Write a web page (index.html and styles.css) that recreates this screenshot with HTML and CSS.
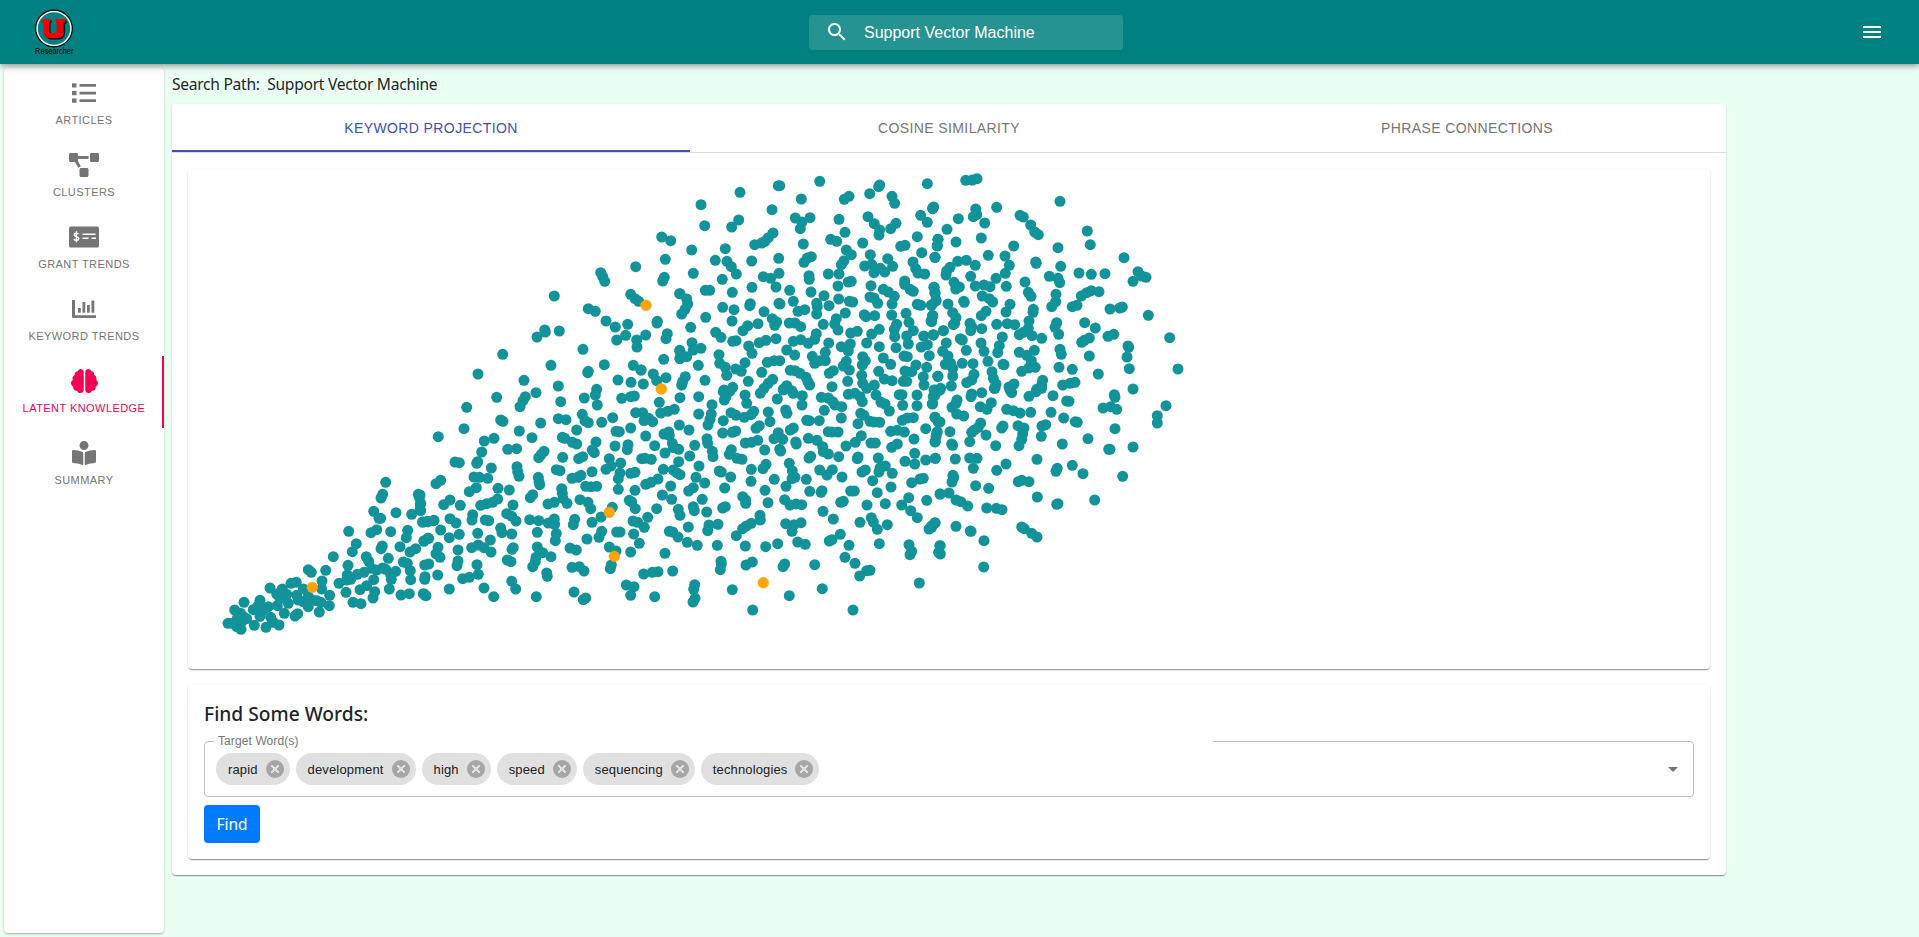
FILE: index.html
```html
<!DOCTYPE html>
<html lang="en">
<head>
<meta charset="utf-8">
<title>Researcher</title>
<link rel="stylesheet" href="styles.css">
</head>
<body>
<header class="topbar">
  <svg class="logo" width="42" height="50" viewBox="0 0 42 50">
    <circle cx="19" cy="19.500" r="18.300" fill="#008080" stroke="#000" stroke-width="1.200"/>
    <circle cx="19" cy="19.500" r="16.900" fill="none" stroke="#fff" stroke-width="1.400"/>
    <path d="M8 11.200h8.500v2.800h-1v8q0 2.500 3.500 2.500t3.500-2.500V14h-1v-2.800H31.500V14l-1.500 1v9.500q-1 6-7 6h-6q-6 0-7-6V15z" fill="#000"/>
    <path d="M6.500 10h9v3l-1.200.7v8.300q0 2.200 3.700 2.200t3.700-2.200v-8.300L20.500 13v-3h9.700v3l-1.500.7v10.300q-.7 5.300-6 5.300h-7.500q-5.300 0-6.500-5.300V13.700L6.500 13z" fill="#ec0000"/>
    <text class="logo-name" x="0" y="45" textLength="38.500" lengthAdjust="spacingAndGlyphs">Researcher</text>
  </svg>
  <div class="search">
    <svg class="search-icon" width="24" height="24" viewBox="0 0 24 24" fill="#fff"><path d="M15.500 14h-.79l-.28-.27C15.410 12.590 16 11.110 16 9.500 16 5.910 13.090 3 9.500 3S3 5.910 3 9.500 5.910 16 9.500 16c1.610 0 3.090-.59 4.230-1.570l.27.28v.79l5 4.990L20.490 19l-4.990-5zm-6 0C7.010 14 5 11.990 5 9.500S7.010 5 9.500 5 14 7.010 14 9.500 11.990 14 9.500 14z"/></svg>
    <span>Support Vector Machine</span>
  </div>
  <svg class="menu" width="24" height="24" viewBox="0 0 24 24" fill="#fff"><path d="M3 18h18v-2H3v2zm0-5h18v-2H3v2zm0-7v2h18V6H3z"/></svg>
</header>
<div class="body">
  <nav class="sidebar">
    <a class="nav-item">
      <svg width="24" height="24" viewBox="0 0 24 24"><path d="M0 2.200h4.500v4.300H0zM0 9.900h4.500v4.300H0zM0 17.500h4.500v4.300H0zM7.500 3h16.500v2.700H7.500zM7.500 10.700h16.500v2.700H7.500zM7.500 18.200h16.500v2.700H7.500z"/></svg>
      <span>Articles</span>
    </a>
    <a class="nav-item">
      <svg width="30" height="24" viewBox="0 0 640 512"><path d="M384 320H256c-17.670 0-32 14.330-32 32v128c0 17.670 14.330 32 32 32h128c17.670 0 32-14.330 32-32V352c0-17.670-14.330-32-32-32zM192 32c0-17.670-14.330-32-32-32H32C14.330 0 0 14.330 0 32v128c0 17.670 14.330 32 32 32h95.720l73.160 128.040C211.980 300.980 232.400 288 256 288h.28L192 175.510V128h224V64H192V32zM608 0H480c-17.670 0-32 14.330-32 32v128c0 17.670 14.330 32 32 32h128c17.670 0 32-14.330 32-32V32c0-17.670-14.330-32-32-32z"/></svg>
      <span>Clusters</span>
    </a>
    <a class="nav-item">
      <svg width="30" height="24" viewBox="0 0 30 24"><rect x="0" y="1.500" width="30" height="21" rx="1.500"/><path d="M13.500 9.200h13M13.500 13.300h6M22.500 13.300h4.500" stroke="#fff" stroke-width="1.500" fill="none"/><path d="M9.600 9.300q-.5-1.100-2.300-1.100-2 0-2 1.700 0 1.300 2.100 1.700 2.300.4 2.300 2 0 1.800-2.300 1.800-1.900 0-2.500-1.300M7.400 6.300v11" stroke="#fff" stroke-width="1.400" fill="none"/></svg>
      <span>Grant Trends</span>
    </a>
    <a class="nav-item">
      <svg width="24" height="24" viewBox="0 0 24 24"><path d="M0 3h3v15.200h21V21H1.200Q0 21 0 19.800zM6 11h2.800v4.700H6zM10.500 5h2.800v10.700h-2.800zM15 8h2.800v7.700H15zM19.500 3.500h2.800v12.200h-2.800z"/></svg>
      <span>Keyword Trends</span>
    </a>
    <a class="nav-item active">
      <svg width="27" height="24" viewBox="0 0 576 512"><path d="M208 0c-29.900 0-54.700 20.500-61.800 48.200-.8 0-1.400-.2-2.200-.2-35.300 0-64 28.700-64 64 0 4.800.6 9.500 1.700 14C52.500 138 32 166.600 32 200c0 12.600 3.200 24.300 8.300 34.900C16.300 248.700 0 274.300 0 304c0 33.300 20.400 61.900 49.400 73.900-.9 4.600-1.400 9.300-1.400 14.100 0 39.800 32.200 72 72 72 4.100 0 8.100-.5 12-1.200 9.600 28.500 36.200 49.200 68 49.200 39.800 0 72-32.200 72-72V64c0-35.300-28.700-64-64-64zm368 304c0-29.700-16.300-55.300-40.300-69.100 5.200-10.600 8.300-22.300 8.300-34.900 0-33.400-20.500-62-49.700-74 1-4.500 1.700-9.200 1.700-14 0-35.300-28.700-64-64-64-.8 0-1.500.2-2.200.2C422.700 20.500 397.900 0 368 0c-35.300 0-64 28.600-64 64v376c0 39.800 32.200 72 72 72 31.800 0 58.400-20.700 68-49.200 3.900.7 7.900 1.200 12 1.200 39.800 0 72-32.200 72-72 0-4.800-.5-9.500-1.400-14.100 29-12 49.400-40.600 49.400-73.900z"/></svg>
      <span>Latent Knowledge</span>
    </a>
    <a class="nav-item">
      <svg width="24" height="24" viewBox="0 0 512 512"><path d="M352 96c0-53.020-42.980-96-96-96s-96 42.980-96 96 42.980 96 96 96 96-42.980 96-96zM233.590 241.100c-59.330-36.320-155.430-46.300-203.790-49.050C13.550 191.130 0 203.510 0 219.140v222.800c0 14.330 11.590 26.280 26.490 27.050 43.660 2.290 131.990 10.680 193.040 41.430 9.370 4.720 20.480-1.710 20.480-11.870V252.560c-.01-4.670-2.320-8.950-6.420-11.460zm248.610-49.050c-48.350 2.740-144.460 12.730-203.780 49.050-4.100 2.510-6.410 6.960-6.410 11.630v245.790c0 10.190 11.140 16.630 20.540 11.900 61.040-30.720 149.320-39.110 192.970-41.400 14.900-.78 26.490-12.730 26.490-27.060V219.140c-.01-15.630-13.560-28.010-29.810-27.090z"/></svg>
      <span>Summary</span>
    </a>
  </nav>
  <main class="content">
    <p class="path">Search Path:&nbsp; Support Vector Machine</p>
    <section class="panel">
      <div class="tabs">
        <div class="tab selected">Keyword Projection</div>
        <div class="tab">Cosine Similarity</div>
        <div class="tab">Phrase Connections</div>
      </div>
      <div class="cards">
        <div class="card plot"><svg id="plot" width="1522" height="500" viewBox="188 169 1522 500"></svg></div>
        <div class="card finder">
          <h2>Find Some Words:</h2>
          <div class="field">
            <span class="notch"></span>
            <span class="label">Target Word(s)</span>
            <span class="chip">rapid<i class="x"></i></span>
            <span class="chip">development<i class="x"></i></span>
            <span class="chip">high<i class="x"></i></span>
            <span class="chip">speed<i class="x"></i></span>
            <span class="chip">sequencing<i class="x"></i></span>
            <span class="chip">technologies<i class="x"></i></span>
            <svg class="arrow" width="24" height="24" viewBox="0 0 24 24"><path d="M7 10l5 5 5-5z" fill="#757575"/></svg>
          </div>
          <button class="find">Find</button>
        </div>
      </div>
    </section>
  </main>
</div>
<script src="plot.js"></script>
</body>
</html>
```
FILE: styles.css
```css
* { box-sizing: border-box; }
body {
  margin: 0;
  height: 937px;
  overflow: hidden;
  display: flex;
  flex-direction: column;
  background: #ebfff3;
  color: #212529;
  font-family: "Liberation Sans", Arial, sans-serif;
}
.topbar {
  height: 64px;
  flex: none;
  position: relative;
  z-index: 1;
  display: grid;
  grid-template-columns: 774px 314px 1fr;
  align-items: center;
  padding: 0 35px;
  background: #008080;
  box-shadow: 0 2px 4px -1px rgba(0,0,0,.2), 0 4px 5px rgba(0,0,0,.14), 0 1px 10px rgba(0,0,0,.12);
}
.logo { margin-top: 3px; overflow: visible; }
.logo-name { font: 9px "Liberation Sans", sans-serif; fill: #000; }
.search {
  height: 35px;
  margin-top: 1px;
  padding-left: 16px;
  display: flex;
  align-items: center;
  gap: 15px;
  border-radius: 4px;
  background: rgba(255,255,255,.15);
  color: #fff;
  font-size: 16px;
}
.search-icon { margin-top: -2px; }
.menu { justify-self: end; }
.body { flex: 1; display: flex; gap: 8px; padding: 4px; }
.sidebar {
  width: 160px;
  height: 865px;
  background: #fff;
  border-radius: 4px;
  box-shadow: 0 1px 3px rgba(0,0,0,.2), 0 1px 1px rgba(0,0,0,.14);
}
.nav-item {
  height: 72px;
  padding-top: 13px;
  display: flex;
  flex-direction: column;
  align-items: center;
  gap: 8px;
  color: #757575;
  fill: #757575;
  font-size: 11px;
  line-height: 14px;
  letter-spacing: .44px;
  text-transform: uppercase;
}
.nav-item.active { color: #f50057; fill: #f50057; box-shadow: inset -2px 0 #f50057; }
.path {
  margin: 0;
  height: 36px;
  padding-top: 4px;
  font: 15.600px/24px "Noto Sans", sans-serif;
  letter-spacing: -.28px;
}
.panel, .card {
  background: #fff;
  border-radius: 4px;
  box-shadow: 0 2px 1px -1px rgba(0,0,0,.24), 0 1px 1px rgba(0,0,0,.16), 0 1px 3px rgba(0,0,0,.12);
}
.panel { width: 1554px; height: 771px; }
.tabs {
  height: 49px;
  display: grid;
  grid-template-columns: repeat(3, 1fr);
  border-bottom: 1px solid #dedede;
}
.tab {
  display: flex;
  align-items: center;
  justify-content: center;
  color: #757575;
  font-size: 14px;
  letter-spacing: .4px;
  text-transform: uppercase;
}
.tab.selected { color: #3f51b5; box-shadow: inset 0 -2px #3f51b5; }
.cards {
  padding: 16px 16px 0;
  display: flex;
  flex-direction: column;
  gap: 16px;
}
.plot { height: 500px; }
.plot svg { display: block; }
.word { fill: #12939a; }
.hit { fill: #ffa500; stroke: #ff9a00; stroke-width: .5; }
.finder { height: 174px; padding: 17px 16px 0; }
.finder h2 {
  margin: 0 0 15px;
  font: 500 19.200px/24px "Noto Sans", sans-serif;
}
.field {
  height: 56px;
  position: relative;
  display: flex;
  align-items: center;
  gap: 6px;
  padding: 0 8px 0 11px;
  border: 1px solid #bdbdbd;
  border-radius: 4px;
}
.notch { position: absolute; left: 9px; top: -1px; width: 999px; height: 1px; background: #fff; }
.label { position: absolute; left: 13px; top: -8px; color: #757575; font-size: 12px; line-height: 14px; letter-spacing: .1px; }
.chip {
  height: 32px;
  display: flex;
  align-items: center;
  gap: 7px;
  padding: 0 6px 0 12px;
  border-radius: 16px;
  background: #e0e0e0;
  color: #212121;
  font-size: 13px;
  letter-spacing: .14px;
}
.x {
  width: 18px;
  height: 18px;
  margin-left: 1px;
  border-radius: 50%;
  background:
    linear-gradient(45deg, transparent 41%, #e0e0e0 43% 57%, transparent 59%) center/8px 8px no-repeat,
    linear-gradient(-45deg, transparent 41%, #e0e0e0 43% 57%, transparent 59%) center/8px 8px no-repeat,
    #a6a6a6;
}
.arrow { margin-left: auto; }
.find {
  display: block;
  width: 56px;
  height: 38px;
  margin-top: 8px;
  padding: 0;
  border: 0;
  border-radius: 4px;
  background: #007bff;
  color: #fff;
  font: 15.500px/38px "Noto Sans", sans-serif;
}
```
FILE: plot.js
```js
// Projected word positions, grouped by region: origin x, origin y, then x y pairs in thirds of a pixel.
const regions = [
  [200, 440, `557 127 548 163 543 174 521 214 537 235 542 235 588 218 446 274 530 269 513 278 572 275 469 311 457 335 547 318 543 326 400 350 499 350 506 364 565 355 444 376 377 391 325 389 334 397 655 163 658 172 635 223 661 194 662 212 668 246 682 244 702 241 623 271 619 293 600 320 647 326 630 336 672 302 686 295 610 366 622 370 631 392 632 419 587 394 568 447 574 418 572 404 557 388 548 384 530 390 515 385 492 397 472 403 452 418 440 420 442 405 521 419 500 437 480 449 524 455 519 474 438 457 417 430 459 487 483 491 603 465 628 461 670 461 676 466 389 466 388 497 366 423 365 447 358 516 350 482 363 487 289 427 273 430 210 444 247 447 230 462 260 463 240 475 232 497 265 490 290 466 310 447 295 480 310 485 325 470 325 500 337 480 253 520 285 528 293 521 180 481 205 500 160 509 190 510 180 529 212 532 220 547 237 555 198 562 163 556 132 487 104 510 122 520 112 535 140 536 125 545 84 550 98 550 110 560 123 568 130 530 173 499`],
  [420, 370, `174 12 312 31 415 48 348 68 230 82 140 112 316 80 309 92 300 110 422 95 503 8 530 58 526 75 532 105 493 84 594 30 633 37 670 42 605 85 632 80 643 78 700 12 710 32 738 23 718 97 663 0 242 150 249 154 132 176 55 200 362 159 298 183 336 203 415 146 438 149 487 133 495 152 505 158 545 157 578 143 470 180 647 128 668 128 672 152 686 145 698 155 722 129 743 124 763 118 778 165 588 184 598 185 632 174 677 198 732 192 746 186 748 196 193 213 222 205 185 246 173 275 170 280 214 294 105 276 118 278 263 238 290 236 372 244 364 253 356 263 427 202 434 205 457 217 470 222 528 216 517 240 523 248 585 228 624 224 622 239 704 227 757 220 735 249 760 233 776 238 428 262 476 266 488 260 568 266 602 279 573 288 558 298 665 266 675 265 694 268 776 275 291 290 293 305 297 319 162 321 178 322 203 325 62 331 48 341 169 353 148 365 234 355 268 360 355 322 357 335 359 344 409 299 420 302 456 325 473 322 483 316 516 305 600 309 595 326 632 310 645 307 730 298 714 327 693 337 677 343 760 300 770 308 780 314 497 349 513 350 530 349 595 358 645 361 752 348 338 374 331 383 90 390 71 404 121 406 233 387 218 397 200 401 182 406 279 405 425 356 427 370 429 385 441 400 403 397 384 402 480 389 504 397 512 416 577 412 543 441 516 457 628 391 635 396 646 416 710 416 727 375 755 388 775 418 780 436 0 375 2 400 0 420 8 456 24 455 40 452 90 446 108 459 158 434 156 450 196 450 206 452 260 431 275 439 288 453 329 449 356 452 385 459 403 447 404 463 464 448 460 464 639 453 653 457 673 472 683 442 62 480 88 503 118 493 173 490 211 510 242 474 246 488 275 492 352 487 409 491 406 512 545 484 537 502 501 507 590 486 600 486 641 492 658 520 748 484 758 486 774 501 24 505 12 514 54 532 48 551 60 562 114 540 155 533 175 525 192 533 213 546 280 533 276 538 352 531 368 548 348 562 393 560 346 575 338 590 450 534 469 540 568 531 588 543 574 585 571 596 632 546 735 550 26 582 14 585 53 615 15 620 14 628 114 573 111 587 171 584 175 613 148 622 128 626 262 570 273 575 380 609 382 619 456 592 478 590 492 603 671 612 697 607 714 605 758 603 275 634 287 657 88 657 192 654 221 680 12 672 18 677 349 680 462 666 490 689 497 684 619 645 642 650 632 676 704 680`],
  [420, 170, `403 378 542 308 548 320 554 334 647 290 725 201 752 212 736 268 733 322 728 333 632 373 645 386 656 394 505 416 526 424 558 453 586 471 623 463 617 496 590 510 650 510 651 531 677 495 712 454 711 459 742 491 738 506 374 480 376 486 351 501 418 483 489 538 393 586 248 553 505 604 553 584 640 586 663 600 731 568 779 371 779 541 780 566`],
  [680, 170, `419 34 295 47 299 47 180 67 63 104 74 167 364 87 276 119 176 150 155 171 507 79 493 88 599 45 596 50 569 71 636 79 644 100 742 41 346 144 390 143 366 156 361 176 477 148 564 140 583 161 599 180 597 195 632 176 648 160 722 136 742 157 761 111 758 116 495 187 370 222 452 208 470 214 548 219 662 229 675 226 712 200 725 248 774 208 772 226 279 189 265 203 255 214 245 219 224 224 35 240 136 236 106 271 141 274 154 290 169 312 215 273 296 265 394 260 382 264 372 277 499 240 514 254 492 272 484 284 571 254 623 266 554 288 575 283 582 308 601 295 614 306 638 289 699 276 707 296 714 309 734 312 765 262 40 310 127 328 157 367 76 361 89 361 250 320 272 325 297 310 288 351 216 352 329 361 387 317 388 328 445 312 477 312 393 366 474 348 505 336 514 334 573 347 674 333 674 343 690 358 700 364 610 358 625 366 643 379 636 402 570 381 582 384 593 400 432 377 476 387 508 394 518 396 447 407 410 400 412 410 410 432 0 371 20 387 23 402 15 418 5 432 128 412 162 419 211 401 209 407 297 400 300 402 340 394 252 425 354 424 374 419 496 429 77 442 156 453 277 446 290 456 284 466 328 459 345 459 362 470 430 463 469 446 464 462 474 480 553 434 558 440 584 437 635 435 678 430 687 457 650 463 643 478 712 403 722 406 754 406 768 390 762 352 765 368 758 437 753 453 203 467 189 482 234 461 32 472 107 487 123 502 158 514 168 512 238 518 258 511 288 506 340 514 362 509 385 520 404 508 409 491 512 489 532 484 575 492 598 478 560 519 598 530 446 519 644 500 648 533 680 498 700 482 685 522 731 498 760 494 790 482 724 531 742 524 36 518 63 535 40 540 20 560 0 545 0 565 206 528 216 550 195 578 117 554 119 580 136 592 167 597 184 604 140 616 55 586 320 540 344 555 397 559 436 547 404 580 420 572 436 572 484 530 511 522 505 543 499 574 490 588 508 600 548 560 556 572 547 585 545 616 610 564 632 583 672 558 682 560 748 557 708 585 675 603 695 605 740 592 730 620 596 604 613 627 636 632 670 634 680 634 773 619 262 577 282 572 299 572 245 607 205 634 278 628 265 640 252 655 331 601 345 602 360 610 378 622 384 636 389 645 460 602 448 610 503 634 75 631 16 620 8 635 5 645 320 647 456 650 158 652 132 660 548 640 583 645 560 655 732 645 310 658 335 662 765 660`],
  [680, 390, `0 23 56 20 130 5 150 3 138 20 133 30 96 44 195 15 200 40 241 10 292 27 310 0 340 10 367 17 366 45 424 22 445 24 458 35 465 45 485 50 505 13 525 10 540 20 547 35 588 15 603 37 615 42 628 63 658 14 666 14 711 15 668 46 711 47 765 15 757 42 56 72 94 72 90 88 84 105 130 92 153 68 168 76 193 82 213 74 221 64 265 66 270 95 317 60 321 70 433 61 484 84 380 91 388 92 418 92 27 120 128 129 157 127 167 123 238 107 228 115 340 114 331 120 295 128 282 146 308 148 542 70 552 76 534 101 570 94 582 96 599 97 667 91 682 84 700 83 737 116 765 82 775 96 632 124 652 121 673 126 702 147 445 125 456 126 474 126 544 137 526 157 498 168 573 159 586 159 385 145 411 151 428 170 770 130 766 155 44 166 81 146 83 160 196 159 214 157 233 151 254 180 347 156 349 162 299 178 302 183 29 198 97 184 99 200 154 179 148 193 171 205 186 208 57 228 392 199 387 204 430 185 445 192 476 200 534 201 532 206 595 204 635 172 652 162 675 214 704 190 704 222 737 210 766 205 48 262 74 279 40 293 26 303 118 243 124 246 152 261 214 238 213 274 258 223 249 236 328 220 337 243 345 262 336 266 318 289 283 268 379 268 419 240 441 255 457 239 486 261 546 246 556 240 616 228 600 234 597 246 637 250 578 272 592 308 633 291 695 278 720 267 730 265 134 294 255 301 389 304 426 302 423 307 512 303 523 303 780 312 67 328 40 350 43 362 80 366 128 354 136 350 188 320 197 330 197 340 264 338 314 329 330 345 348 342 365 344 429 364 460 387 482 337 490 334 561 345 616 341 686 323 665 345 692 362 712 383 740 331 25 411 87 405 83 422 114 403 240 376 241 390 214 400 199 408 188 416 169 437 317 401 342 404 363 398 336 424 540 397 574 383 580 396 592 418 622 404 765 398 755 408 747 417 22 457 52 466 112 466 196 468 257 470 293 461 353 456 376 463 448 453 456 449 481 433 507 466 598 461 687 464 695 484 690 494 780 467 776 487 123 514 124 522 121 539 198 525 217 516 314 522 309 530 404 524 495 502 525 520 560 542 570 541 539 558 718 579 44 584 41 598 45 625 39 636 157 599 328 617 427 596 218 660 519 660`],
  [930, 170, `107 31 127 30 141 26 390 94 8 115 85 146 137 117 140 134 130 140 200 112 164 159 51 178 24 208 22 228 78 216 154 204 270 136 280 141 302 165 314 186 325 194 251 228 384 233 472 183 481 224 582 263 15 262 83 274 109 271 136 286 175 256 225 258 238 286 226 310 198 325 122 319 60 292 50 303 48 315 317 276 319 280 392 289 358 319 384 325 389 338 447 309 484 313 525 311 624 305 635 318 648 322 609 334 72 337 88 351 77 357 136 348 162 345 180 350 229 349 285 336 12 352 15 370 18 393 5 405 54 402 101 394 103 397 157 378 178 386 188 396 240 403 228 426 168 424 154 437 295 367 303 379 378 373 377 395 365 410 310 418 309 427 297 453 454 378 470 368 484 362 507 365 427 410 441 406 540 417 569 414 577 411 655 436 8 437 5 455 68 428 78 443 74 460 70 464 120 460 125 470 122 482 155 476 200 463 232 461 254 464 40 482 10 495 295 475 280 487 268 494 306 497 335 505 380 458 375 472 386 493 464 458 496 474 534 499 551 493 719 503 478 504 463 511 455 517 91 506 97 510 49 519 153 519 217 501 208 527 203 548 162 544 109 541 38 544 54 558 268 547 290 556 313 541 304 572 316 592 296 594 275 604 390 538 394 553 478 558 594 528 596 532 591 561 598 596 744 597 46 583 62 580 68 595 68 618 97 580 129 581 174 574 219 583 222 584 24 619 132 613 125 630 110 638 186 605 190 625 198 642 193 655 252 642 237 651 338 631 335 645 320 658 387 592 427 598 505 612 398 645 420 640 435 637 609 657 64 648 32 655 12 660`],
  [930, 390, `30 0 10 20 8 40 125 12 123 20 155 8 195 -5 245 8 240 0 297 19 318 5 335 -5 369 17 410 33 417 34 553 14 555 22 708 47 682 77 682 99 519 54 542 50 560 58 81 30 78 40 66 52 80 72 101 78 151 50 184 38 171 58 230 58 250 62 270 69 302 67 363 67 401 84 436 95 442 97 15 82 30 96 22 125 18 140 15 156 60 125 152 99 145 112 133 120 125 127 119 155 168 135 219 108 215 114 264 107 282 114 278 132 275 148 267 167 336 108 347 104 334 139 65 162 68 166 197 167 397 162 474 146 555 116 536 178 540 178 609 171 16 205 76 207 119 204 141 205 130 235 200 241 228 222 321 208 382 235 378 244 427 226 459 251 578 259 69 256 71 263 66 276 137 287 176 295 265 275 275 271 297 275 31 312 57 309 78 330 92 335 113 348 170 354 199 355 216 359 322 321 380 343 384 341 494 330 15 399 5 412 78 409 121 423 123 424 162 452 161 531 275 411 283 416 305 430 321 441 30 467 27 487 31 492`]
];
const hits = [[312.3, 587.3], [646, 305.3], [661.3, 389], [609.3, 512.3], [614.3, 556.3], [763.3, 582.7]];

const plot = document.getElementById("plot");
function dot(x, y, r, cls) {
  const c = document.createElementNS("http://www.w3.org/2000/svg", "circle");
  c.setAttribute("cx", x.toFixed(1));
  c.setAttribute("cy", y.toFixed(1));
  c.setAttribute("r", r);
  c.setAttribute("class", cls);
  plot.appendChild(c);
}
for (const [ox, oy, text] of regions) {
  const v = text.split(" ").map(Number);
  for (let i = 0; i < v.length; i += 2) dot(ox + v[i] / 3, oy + v[i + 1] / 3, 5.5, "word");
}
for (const [x, y] of hits) dot(x, y, 5.4, "hit");
```
